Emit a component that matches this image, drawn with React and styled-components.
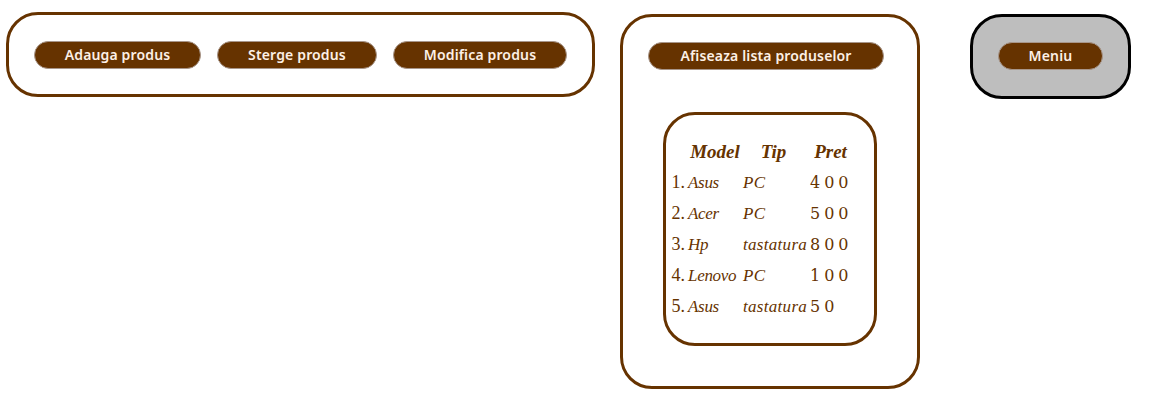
import styled, { createGlobalStyle } from "styled-components";

const brown = "#663300";

const GlobalStyle = createGlobalStyle`
  html, body {
    margin: 0;
    background: #fff;
  }
`;

const Page = styled.div`
  display: flex;
  align-items: flex-start;
  padding: 12px 0 0 6px;
  height: 391px;
`;

const Panel = styled.section`
  box-sizing: border-box;
  border: 3px solid ${brown};
  border-radius: 32px;
  background: #fff;
`;

const ActionsPanel = styled(Panel)`
  display: flex;
  gap: 16px;
  width: 589px;
  height: 85px;
  padding: 26px 25px;
`;

const ListPanel = styled(Panel)`
  width: 300px;
  height: 375px;
  margin: 2px 0 0 25px;
  padding: 25px 25px 0;
`;

const MenuPanel = styled(Panel)`
  width: 161px;
  height: 85px;
  margin: 2px 0 0 50px;
  padding: 25px;
  background: #bebebe;
  border-color: #000;
`;

const Button = styled.button`
  box-sizing: border-box;
  display: block;
  width: ${({ $w }) => $w}px;
  height: 28px;
  padding: 0 0 2px;
  border: 1px solid #a8968a;
  border-radius: 14px;
  background: ${brown};
  color: #fdf0e6;
  font-family: "Noto Sans", sans-serif;
  font-size: 14px;
  font-weight: 600;
  letter-spacing: 0.15px;
  white-space: nowrap;
`;

const TableCard = styled.div`
  box-sizing: border-box;
  width: 214px;
  height: 234px;
  margin: 42px 0 0 15px;
  padding: 21px 0 0 4px;
  border: 3px solid ${brown};
  border-radius: 32px;
`;

const Table = styled.table`
  border-collapse: collapse;
  table-layout: fixed;
  width: 188px;
  font-family: "Liberation Serif", serif;
  font-style: italic;
  font-size: 17px;
  color: ${brown};
`;

const HeadCell = styled.th`
  box-sizing: border-box;
  height: 31px;
  padding: 0 ${({ $shift }) => $shift || 0}px 0 0;
  font-size: 19px;
  font-weight: 700;
  text-align: center;
  width: ${({ $w }) => $w}px;
`;

const Row = styled.tr`
  height: 31px;
`;

const IndexCell = styled.td`
  padding: 0 3px 0 0;
  font-size: 18px;
  font-style: normal;
  text-align: right;
`;

const TextCell = styled.td`
  padding: 0 0 0 ${({ $indent }) => $indent}px;
  letter-spacing: ${({ $spread }) => $spread || 0}px;
  white-space: nowrap;
`;

const PriceCell = styled.td`
  padding: 0 0 0 1px;
  font-family: "DejaVu Serif", serif;
  font-size: 16px;
  font-style: normal;
  letter-spacing: 4px;
  white-space: nowrap;
`;

const products = [
  { model: "Asus", tip: "PC", pret: 400 },
  { model: "Acer", tip: "PC", pret: 500 },
  { model: "Hp", tip: "tastatura", pret: 800 },
  { model: "Lenovo", tip: "PC", pret: 100 },
  { model: "Asus", tip: "tastatura", pret: 50 },
];

export default function App() {
  return (
    <>
      <GlobalStyle />
      <Page>
        <ActionsPanel>
          <Button $w={167}>Adauga produs</Button>
          <Button $w={160}>Sterge produs</Button>
          <Button $w={174}>Modifica produs</Button>
        </ActionsPanel>
        <ListPanel>
          <Button $w={236}>Afiseaza lista produselor</Button>
          <TableCard>
            <Table>
              <thead>
                <tr>
                  <HeadCell $w={18} />
                  <HeadCell $w={54}>Model</HeadCell>
                  <HeadCell $w={67} $shift={4}>Tip</HeadCell>
                  <HeadCell $w={49} $shift={6}>Pret</HeadCell>
                </tr>
              </thead>
              <tbody>
                {products.map((p, i) => (
                  <Row key={i}>
                    <IndexCell>{i + 1}.</IndexCell>
                    <TextCell $indent={0} $spread={-0.3}>{p.model}</TextCell>
                    <TextCell $indent={1} $spread={0.3}>{p.tip}</TextCell>
                    <PriceCell>{p.pret}</PriceCell>
                  </Row>
                ))}
              </tbody>
            </Table>
          </TableCard>
        </ListPanel>
        <MenuPanel>
          <Button $w={105}>Meniu</Button>
        </MenuPanel>
      </Page>
    </>
  );
}
